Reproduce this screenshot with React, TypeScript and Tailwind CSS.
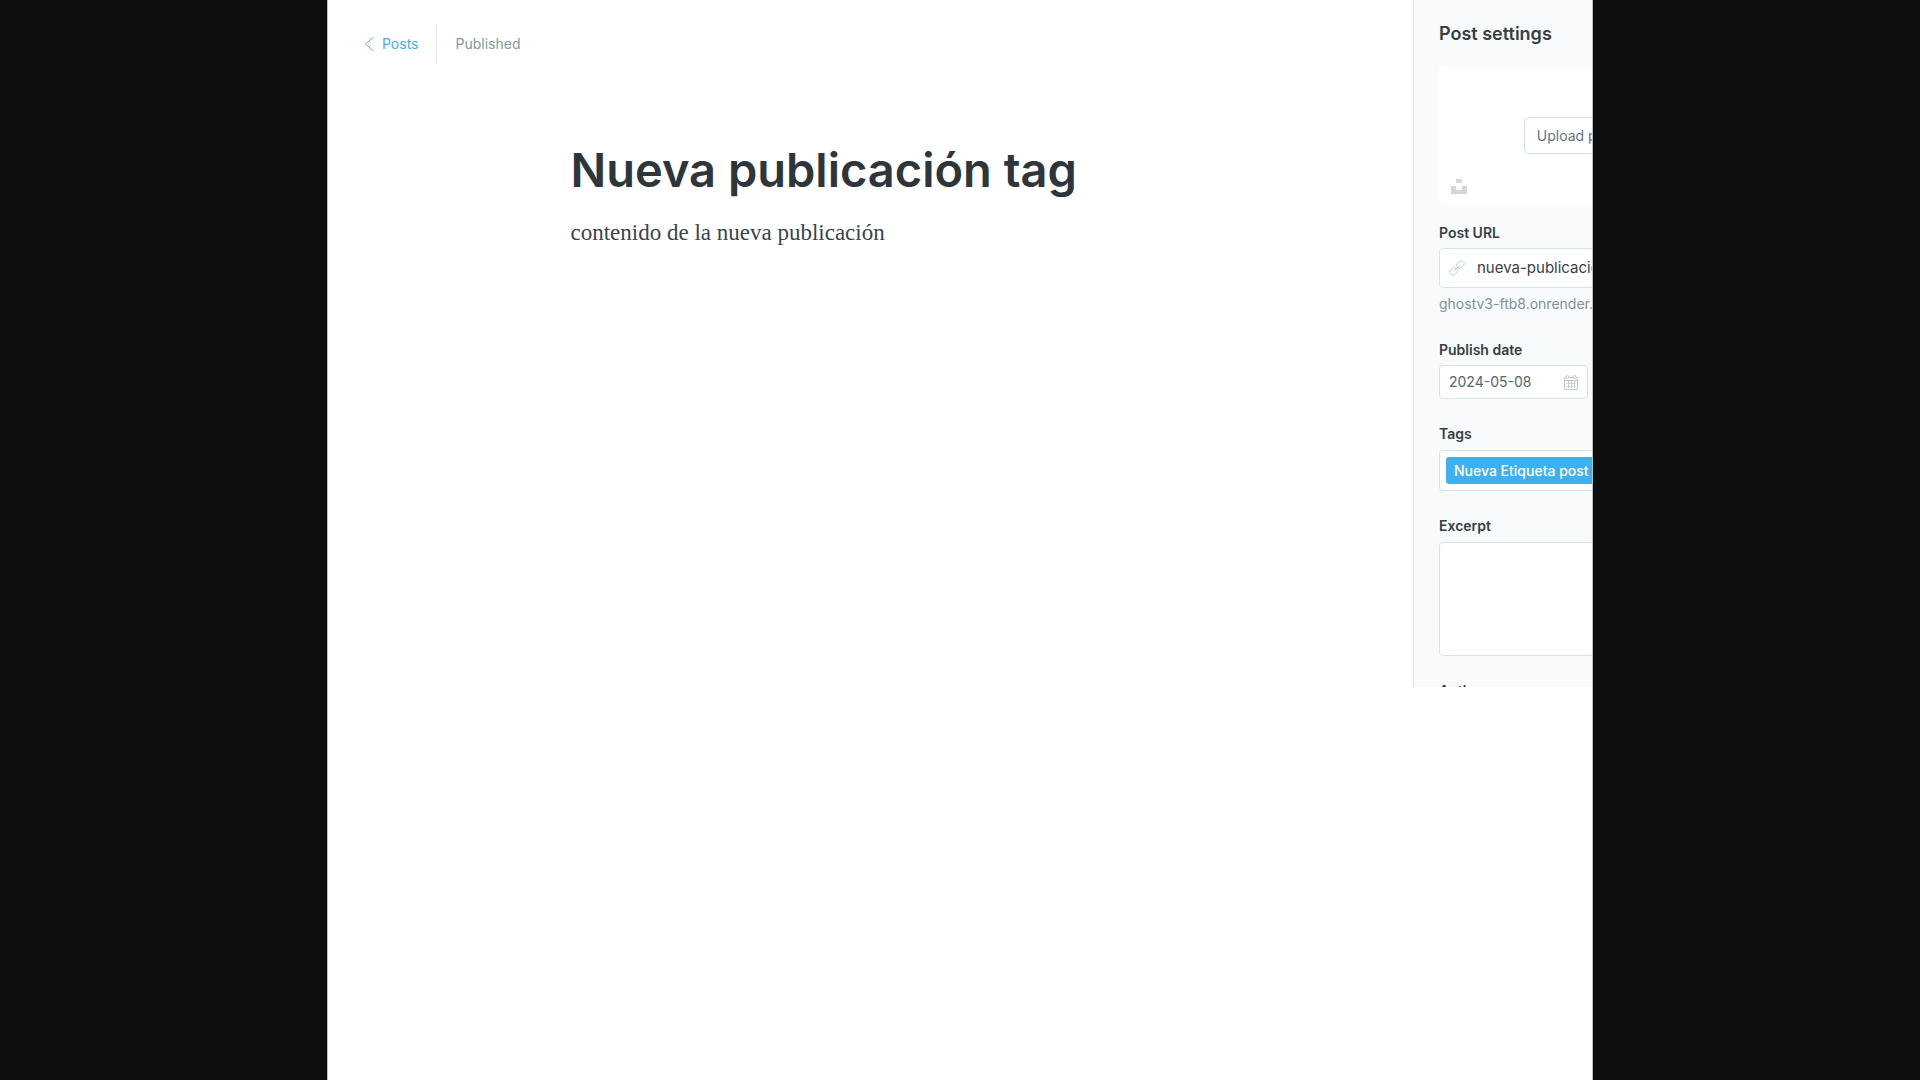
import type { ReactNode } from "react";

function UnsplashIcon() {
  return (
    <svg viewBox="0 0 16 16" className="size-4 fill-[#d6d6d6]" aria-hidden="true">
      <path d="M5 1h6v4H5zM0 8h5v4h6V8h5v8H0z" />
    </svg>
  );
}

function LinkIcon() {
  return (
    <svg
      viewBox="0 0 24 24"
      className="size-4 shrink-0 fill-none stroke-[#b5cedb] stroke-[1.3]"
      strokeLinecap="round"
      strokeLinejoin="round"
      aria-hidden="true"
    >
      <rect x="-5.5" y="-4" width="12" height="8" rx="3" transform="translate(16.8 7.2) rotate(-45)" />
      <rect x="-6.5" y="-4" width="12" height="8" rx="3" transform="translate(7.2 16.8) rotate(-45)" />
      <path d="M8 16l8-8" />
    </svg>
  );
}

function CalendarIcon() {
  return (
    <svg viewBox="0 0 14 15" className="h-[15px] w-3.5 shrink-0 fill-none stroke-[#c3c9cc]" aria-hidden="true">
      <path d="M.5 2.5h13v12H.5zM.5 5.5h13" />
      <path d="M2.5 8.5h9M2.5 11.5h9M4.5 6v7M7.5 6v7M10.5 6v7" strokeWidth=".8" />
      <circle cx="3.5" cy="2" r="1.5" className="fill-white" />
      <circle cx="10.5" cy="2" r="1.5" className="fill-white" />
    </svg>
  );
}

function Label({ htmlFor, children }: { htmlFor: string; children: ReactNode }) {
  return (
    <label htmlFor={htmlFor} className="block text-sm leading-5 font-semibold text-[#343f44]">
      {children}
    </label>
  );
}

function Header() {
  return (
    <header className="flex items-center pt-[25px] pl-9 text-sm">
      <a href="#posts" className="flex items-center gap-2 text-[#3eb0ef]">
        <svg viewBox="0 0 10 14" className="h-3.5 w-2.5 fill-none stroke-current" aria-hidden="true">
          <path d="M9 .5L1.5 7 9 13.5" strokeLinecap="round" strokeLinejoin="round" strokeWidth=".9" />
        </svg>
        Posts
      </a>
      <span className="mr-[18px] ml-[18px] h-[38px] w-px bg-[#e3edf3]" />
      <span className="text-[#839aa5]">Published</span>
    </header>
  );
}

function PostSettings() {
  return (
    <aside className="h-[687px] w-[179px] shrink-0 overflow-hidden border-l border-[#dfe9ef] bg-[#f8fafc]">
      <form className="w-[370px] px-[25px] pt-5">
        <h2 className="text-lg leading-7 font-semibold text-[#343f44]">Post settings</h2>

        <div className="mt-[19px] flex h-[137px] flex-col rounded bg-white px-3 pt-[50px] pb-[10px]">
          <button
            type="button"
            className="h-[37px] self-center rounded-[5px] border border-[#d2e0e7] px-3 text-sm text-[#5f7682]"
          >
            Upload post image
          </button>
          <button type="button" aria-label="Search Unsplash" className="mt-auto self-start">
            <UnsplashIcon />
          </button>
        </div>

        <div className="mt-[19px]">
          <Label htmlFor="url">Post URL</Label>
          <div className="mt-[5px] flex h-10 items-center gap-3 rounded border border-[#d5e4eb] bg-white px-[9px]">
            <LinkIcon />
            <input
              id="url"
              defaultValue="nueva-publicacion-tag"
              className="min-w-0 flex-1 text-[15px] text-[#394047] outline-none"
            />
          </div>
          <p className="mt-[6px] text-sm leading-5 text-[#7d929e]">ghostv3-ftb8.onrender.com/</p>
        </div>

        <div className="mt-[26px]">
          <Label htmlFor="date">Publish date</Label>
          <div className="mt-[5px] flex h-[34px] w-[149px] items-center rounded border border-[#d5e4eb] bg-white px-[9px]">
            <input
              id="date"
              defaultValue="2024-05-08"
              className="min-w-0 flex-1 text-sm text-[#54666d] outline-none"
            />
            <CalendarIcon />
          </div>
        </div>

        <div className="mt-[25px]">
          <Label htmlFor="tags">Tags</Label>
          <div className="mt-[6px] flex h-[41px] items-center rounded border border-[#d5e4eb] bg-white px-[6px]">
            <span className="flex h-[27px] shrink-0 items-center gap-2 rounded-[3px] bg-[#3eb0ef] px-2 text-sm font-medium text-white">
              Nueva Etiqueta post
              <button type="button" aria-label="Remove tag">×</button>
            </span>
            <input id="tags" className="min-w-0 flex-1 outline-none" />
          </div>
        </div>

        <div className="mt-[25px]">
          <Label htmlFor="excerpt">Excerpt</Label>
          <textarea
            id="excerpt"
            className="mt-[6px] block h-[114px] w-full resize-none rounded border border-[#d5e4eb] bg-white p-2 outline-none"
          />
        </div>

        <div className="mt-[25px]">
          <Label htmlFor="authors">Authors</Label>
          <input id="authors" className="mt-[6px] block h-10 w-full rounded border border-[#d5e4eb] bg-white" />
        </div>
      </form>
    </aside>
  );
}

export default function App() {
  return (
    <div className="min-h-screen bg-[#0e0e0e] font-['Inter',sans-serif]">
      <div className="mx-auto flex min-h-screen max-w-[1266px] items-start overflow-hidden border-x border-[#bdbdbd] bg-white">
        <main className="min-w-0 flex-1">
          <Header />
          <article className="mx-auto max-w-[600px] pt-[77px]">
            <h1 className="text-[47px] leading-[60px] font-semibold text-[#2c363b]">Nueva publicación tag</h1>
            <p className="mt-[17px] font-['Liberation_Serif',serif] text-[23px] leading-8 text-[#37464d]">
              contenido de la nueva publicación
            </p>
          </article>
        </main>
        <PostSettings />
      </div>
    </div>
  );
}
